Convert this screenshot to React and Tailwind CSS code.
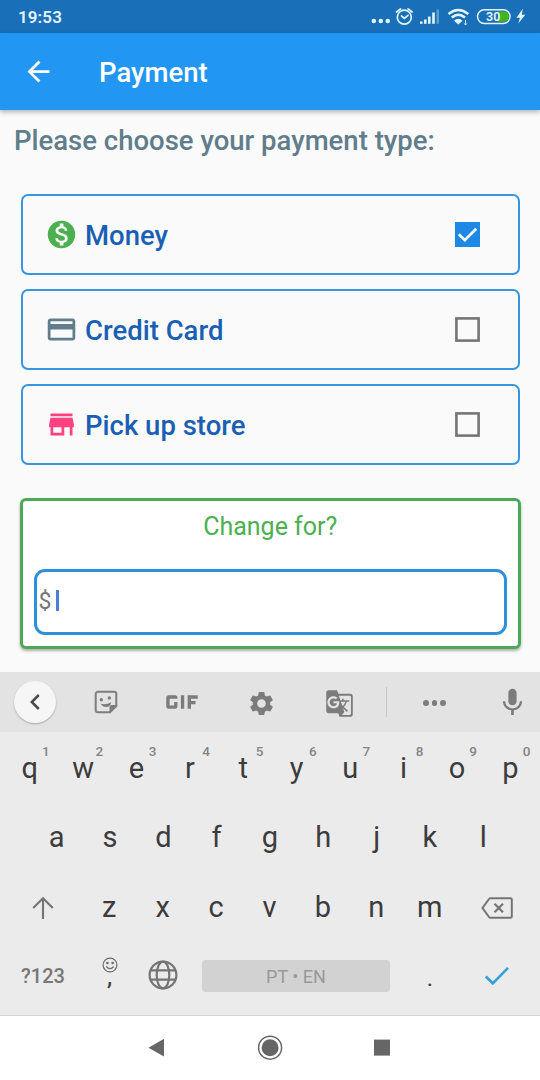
import React from "react";
import {
  MdArrowBack,
  MdCreditCard,
  MdGif,
  MdGTranslate,
  MdMic,
  MdMonetizationOn,
  MdSettings,
  MdStore,
} from "react-icons/md";

function StatusBar() {
  return (
    <div className="flex h-[33px] items-center justify-between bg-[#1a70b8] pt-px pl-[18px] pr-[13px] text-[#e3f4ff]">
      <span className="text-[17px] leading-[32px] font-semibold tracking-[0.1px]">19:53</span>
      <svg width="156" height="33" viewBox="0 0 156 33" fill="none" className="-mt-px">
        <g fill="currentColor">
          <circle cx="2.8" cy="21" r="2.3" />
          <circle cx="9.8" cy="21" r="2.3" />
          <circle cx="16.8" cy="21" r="2.3" />
        </g>
        <g stroke="currentColor" strokeWidth="1.7" strokeLinecap="round">
          <circle cx="33.3" cy="17.2" r="7" />
          <path d="M25.5 12 L29.5 8.8 M41.1 12 L37.1 8.8 M30.5 15.8 L33.3 18.3 L37 15.3" />
        </g>
        <g fill="currentColor">
          <rect x="49" y="21.5" width="2.6" height="2.3" />
          <rect x="53" y="19.5" width="2.6" height="4.3" />
          <rect x="57" y="16.5" width="2.6" height="7.3" />
          <rect x="61.2" y="12.5" width="2.6" height="11.3" />
          <rect x="65.6" y="9.5" width="2.4" height="14.3" opacity="0.35" />
        </g>
        <g stroke="currentColor" strokeWidth="2.4">
          <path d="M77.5 14 Q87.3 6 97.3 14" />
          <path d="M80.8 17.5 Q87.3 11.8 94 17.5" />
        </g>
        <path d="M83 20.7 Q87.3 16.8 91.6 20.7 L87.3 24.5 Z" fill="currentColor" />
        <path d="M94.5 20 V25 M93.2 23.5 L94.5 25 L95.8 23.5" stroke="currentColor" strokeWidth="0.9" />
        <path d="M127 11.5 H133 A5 5 0 0 1 133 21.7 H127 Z" fill="#43b51c" />
        <rect x="106.5" y="9.8" width="32.6" height="13.6" rx="6.8" stroke="currentColor" strokeWidth="1.5" />
        <text x="122.2" y="21.2" textAnchor="middle" className="text-[12.5px] font-semibold" fill="currentColor">30</text>
        <path d="M151.8 8.8 L145.5 17.8 H149 L147.3 23.5 L154.3 14.8 H150.8 Z" fill="currentColor" />
      </svg>
    </div>
  );
}

function PaymentOption({ icon, label, checked }) {
  return (
    <div className="flex h-[81px] items-center rounded-[7px] border-2 border-[#3895de] pr-[37.5px] pl-[22px]">
      {icon}
      <span className="ml-[7px] flex-1 pt-[3px] text-[27.5px] leading-8 font-medium text-[#1a5fb4]">{label}</span>
      {checked ? (
        <span className="flex h-[25px] w-[25px] items-center justify-center bg-[#1e88e5]">
          <svg width="25" height="25" viewBox="0 0 25 25" fill="none">
            <path d="M3.8 12.3 L9.8 18.2 L21.2 6.8" stroke="white" strokeWidth="2.7" />
          </svg>
        </span>
      ) : (
        <svg width="25" height="25" viewBox="0 0 25 25" fill="none">
          <rect x="1.4" y="1.4" width="22.2" height="22.2" stroke="#757575" strokeWidth="2.6" />
        </svg>
      )}
    </div>
  );
}

function StickerIcon() {
  return (
    <svg width="24" height="24" viewBox="0 0 24 24" fill="none">
      <path d="M4 1.7 H20 A2.3 2.3 0 0 1 22.3 4 V16 L16 22.3 H4 A2.3 2.3 0 0 1 1.7 20 V4 A2.3 2.3 0 0 1 4 1.7 Z" stroke="#7d7d7d" strokeWidth="2" />
      <path d="M22.8 15 L15.5 22.8 V17.5 A2.5 2.5 0 0 1 18 15 Z" fill="#7d7d7d" />
      <path d="M6.8 13.8 Q12.5 15 17.2 12.2 Q16.5 17 12.5 17 Q8.5 17 6.8 13.8 Z" fill="#7d7d7d" />
      <circle cx="7.3" cy="9.8" r="1.7" fill="#7d7d7d" />
      <circle cx="15.3" cy="8" r="1.7" fill="#7d7d7d" />
    </svg>
  );
}

function GlobeIcon() {
  return (
    <svg width="30" height="30" viewBox="0 0 30 30" fill="none" stroke="#747474" strokeWidth="2.2">
      <circle cx="15" cy="15" r="13.4" />
      <ellipse cx="15" cy="15" rx="6.3" ry="13.4" />
      <path d="M3 10.4 H27 M3 19.6 H27" />
    </svg>
  );
}

function Toolbar() {
  return (
    <div className="flex h-[60px] items-center bg-[#e3e3e3] text-[#7c7c7c]">
      <div className="flex w-[70px] justify-center">
        <span className="flex h-[42px] w-[42px] items-center justify-center rounded-full bg-[#f6f6f6] shadow-[0_1px_2px_rgba(0,0,0,0.25)]">
          <svg width="12" height="18" viewBox="0 0 12 18" fill="none">
            <path d="M9.8 2 L2.8 9 L9.8 16" stroke="#4a4a4a" strokeWidth="2.5" />
          </svg>
        </span>
      </div>
      <div className="flex w-[71px] justify-center"><StickerIcon /></div>
      <div className="flex w-[82px] justify-center"><MdGif size={54} /></div>
      <div className="flex w-[76px] justify-center pt-[2px]"><MdSettings size={29} /></div>
      <div className="flex w-[80px] justify-center pt-[3px]"><MdGTranslate size={29} /></div>
      <div className="flex w-[14px] justify-center"><span className="h-[30px] w-px bg-[#c9c9c9]" /></div>
      <div className="flex w-[83px] justify-center gap-[3px] pt-[2px]">
        <span className="h-[5.6px] w-[5.6px] rounded-full bg-[#7c7c7c]" />
        <span className="h-[5.6px] w-[5.6px] rounded-full bg-[#7c7c7c]" />
        <span className="h-[5.6px] w-[5.6px] rounded-full bg-[#7c7c7c]" />
      </div>
      <div className="flex flex-1 justify-center pl-2"><MdMic size={33} /></div>
    </div>
  );
}

function Key({ letter, hint }) {
  return (
    <div className="relative flex h-[70px] flex-1 items-center justify-center">
      <span className="pt-[2px] text-[29px] leading-9 text-[#3c3c3c]">{letter}</span>
      {hint && <span className="absolute top-[11px] left-[39px] text-[13.5px] leading-4 font-medium text-[#858585]">{hint}</span>}
    </div>
  );
}

function Keyboard() {
  return (
    <div className="h-[344px] border-b border-[#d4d4d4] bg-[#ebebeb]">
      <Toolbar />
      <div className="flex h-[69px] px-[3px]">
        {[..."qwertyuiop"].map((c, i) => <Key key={c} letter={c} hint={"1234567890"[i]} />)}
      </div>
      <div className="flex h-[70px] px-[30px]">
        {[..."asdfghjkl"].map((c) => <Key key={c} letter={c} />)}
      </div>
      <div className="flex h-[69px] pr-[3.5px] pl-[2.5px]">
        <div className="flex h-[70px] w-[80px] items-center justify-center pt-1">
          <svg width="22" height="24" viewBox="0 0 22 24" fill="none" stroke="#747474" strokeWidth="2.1">
            <path d="M11 23 V3 M1.2 12 L11 2.3 L20.8 12" />
          </svg>
        </div>
        {[..."zxcvbnm"].map((c) => <Key key={c} letter={c} />)}
        <div className="flex h-[70px] w-[80px] items-center justify-center pt-1 pl-px">
          <svg width="32" height="22" viewBox="0 0 32 22" fill="none" stroke="#747474" strokeWidth="2">
            <path d="M9.5 1.2 H29.5 Q30.8 1.2 30.8 2.5 V19.5 Q30.8 20.8 29.5 20.8 H9.5 Q8.5 20.8 8 20 L1.5 11 L8 2 Q8.5 1.2 9.5 1.2 Z" />
            <path d="M13.5 6.8 L22 15.3 M22 6.8 L13.5 15.3" strokeWidth="2.2" />
          </svg>
        </div>
      </div>
      <div className="flex h-[70px] items-center px-[3px]">
        <div className="w-[80px] pt-[2px] text-center text-[20px] font-medium text-[#777]">?123</div>
        <div className="flex h-[70px] w-[53px] flex-col items-center pt-[17px]">
          <svg width="16" height="16" viewBox="0 0 16 16" fill="none" stroke="#6d6d6d" strokeWidth="1.2">
            <circle cx="8" cy="8" r="6.9" />
            <path d="M4.3 9.5 Q8 13.8 11.7 9.5" />
            <circle cx="5.4" cy="6" r="0.7" fill="#6d6d6d" />
            <circle cx="10.6" cy="6" r="0.7" fill="#6d6d6d" />
          </svg>
          <span className="-mt-[12px] text-[26px] leading-[30px] text-[#3c3c3c]">,</span>
        </div>
        <div className="flex w-[53px] justify-center"><GlobeIcon /></div>
        <div className="flex w-[214px] justify-center pt-px">
          <span className="h-[32px] w-[188px] rounded-[4px] bg-[#d2d2d2] pt-px text-center text-[18px] leading-[32px] text-[#999]">PT • EN</span>
        </div>
        <div className="w-[54px] pt-[6px] text-center text-[24px] leading-8 text-[#3c3c3c]">.</div>
        <div className="flex flex-1 justify-center pt-px">
          <svg width="26" height="20" viewBox="0 0 26 20" fill="none">
            <path d="M1.8 10.5 L8.8 17.3 L24 1.8" stroke="#35a0dc" strokeWidth="2.6" />
          </svg>
        </div>
      </div>
    </div>
  );
}

export default function App() {
  return (
    <div className="flex h-[1080px] w-[540px] flex-col overflow-hidden bg-[#fafafa] font-['Roboto',sans-serif]">
      <StatusBar />
      <header className="flex h-[77px] items-center bg-[#2196f3] pl-[22px] text-white shadow-[0_2px_5px_rgba(0,0,0,0.3)]">
        <MdArrowBack size={33} />
        <h1 className="ml-[44px] pt-[2px] text-[27.5px] leading-8 font-medium">Payment</h1>
      </header>
      <main className="flex h-[562px] flex-col pt-[15px] pr-[20.5px] pl-[21px]">
        <h2 className="-ml-[7px] text-[27.5px] leading-8 font-medium text-[#607d8b]">Please choose your payment type:</h2>
        <div className="mt-[37px] flex flex-col gap-[14px]">
          <PaymentOption icon={<MdMonetizationOn size={33} className="text-[#4caf50]" />} label="Money" checked />
          <PaymentOption icon={<MdCreditCard size={33} className="text-[#607d8b]" />} label="Credit Card" />
          <PaymentOption icon={<MdStore size={33} className="text-[#ff4081]" />} label="Pick up store" />
        </div>
        <section className="-mx-[1.5px] mt-[32.5px] h-[151px] rounded-[6px] border-[3px] border-[#4da956] bg-white px-[11px] pt-[9px] shadow-[0_2px_3px_rgba(0,0,0,0.3)]">
          <div className="text-center text-[25px] leading-[34px] text-[#4caf50]">Change for?</div>
          <div className="mt-[25.5px] flex h-[66px] items-center rounded-[11px] border-[3px] border-[#2c90dd] pb-px pl-[2px]">
            <span className="text-[23px] leading-8 text-[#777]">$</span>
            <span className="mb-[2px] ml-[5px] h-[21px] w-[3px] bg-[#4a80d4]" />
          </div>
        </section>
      </main>
      <Keyboard />
      <nav className="flex h-[64px] items-center justify-center bg-white">
        <svg width="244" height="26" viewBox="0 0 244 26" fill="#666">
          <path d="M0.5 12.7 L16 3.8 V21.5 Z" />
          <circle cx="122.1" cy="12.7" r="11.5" fill="none" stroke="#666" strokeWidth="1.5" />
          <circle cx="122.1" cy="12.7" r="8.5" />
          <rect x="226" y="4.6" width="16" height="16" />
        </svg>
      </nav>
    </div>
  );
}
